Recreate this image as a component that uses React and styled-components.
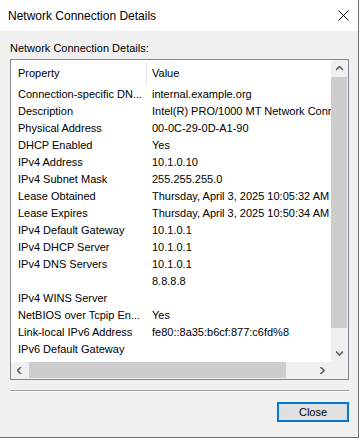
import React from 'react';
import styled, { createGlobalStyle } from 'styled-components';

const GlobalStyle = createGlobalStyle`
  html, body {
    margin: 0;
    padding: 0;
    background: #ffffff;
  }
  * {
    box-sizing: border-box;
  }
`;

const rows = [
  ['Connection-specific DN...', 'internal.example.org'],
  ['Description', 'Intel(R) PRO/1000 MT Network Connection'],
  ['Physical Address', '00-0C-29-0D-A1-90'],
  ['DHCP Enabled', 'Yes'],
  ['IPv4 Address', '10.1.0.10'],
  ['IPv4 Subnet Mask', '255.255.255.0'],
  ['Lease Obtained', 'Thursday, April 3, 2025 10:05:32 AM'],
  ['Lease Expires', 'Thursday, April 3, 2025 10:50:34 AM'],
  ['IPv4 Default Gateway', '10.1.0.1'],
  ['IPv4 DHCP Server', '10.1.0.1'],
  ['IPv4 DNS Servers', '10.1.0.1'],
  ['', '8.8.8.8'],
  ['IPv4 WINS Server', ''],
  ['NetBIOS over Tcpip En...', 'Yes'],
  ['Link-local IPv6 Address', 'fe80::8a35:b6cf:877:c6fd%8'],
  ['IPv6 Default Gateway', ''],
  ['IPv6 DNS Servers', ''],
];

const Window = styled.div`
  width: 359px;
  height: 438px;
  display: flex;
  flex-direction: column;
  border-right: 1px solid #6f6f6f;
  border-bottom: 1px solid #6f6f6f;
  font-family: 'Liberation Sans', Arial, sans-serif;
  color: #000;
`;

const TitleBar = styled.div`
  height: 31px;
  flex: none;
  display: flex;
  align-items: center;
  justify-content: space-between;
  padding: 0 9px 0 8px;
  background: #fff;
  font-size: 12px;
`;

const Body = styled.div`
  flex: 1;
  background: #f0f0f0;
  padding: 11px 9px 0 10px;
  display: flex;
  flex-direction: column;
  font-size: 11px;
`;

const Label = styled.div`
  line-height: 13px;
  margin-bottom: 4px;
`;

const ListBox = styled.div`
  height: 321px;
  border: 1px solid #828790;
  background: #fff;
  display: grid;
  grid-template-columns: 320px 17px;
  grid-template-rows: 302px 17px;
`;

const Content = styled.div`
  overflow: hidden;
`;

const Header = styled.div`
  height: 26px;
  display: flex;
  align-items: flex-start;
  padding-top: 2px;
`;

const HeaderCell = styled.div`
  height: 23px;
  line-height: 23px;
  width: ${p => (p.$first ? '136px' : 'auto')};
  padding-left: ${p => (p.$first ? '7px' : '5px')};
  border-right: ${p => (p.$first ? '1px solid #e5e5e5' : 'none')};
`;

const Row = styled.div`
  display: grid;
  grid-template-columns: 136px auto;
  height: 17px;
  line-height: 17px;
  white-space: nowrap;
`;

const Cell = styled.div`
  padding-left: ${p => (p.$value ? '5px' : '7px')};
  overflow: ${p => (p.$value ? 'visible' : 'hidden')};
`;

const VScroll = styled.div`
  background: #f0f0f0;
  display: flex;
  flex-direction: column;
`;

const HScroll = styled.div`
  background: #f0f0f0;
  display: flex;
`;

const ArrowBox = styled.div`
  width: 17px;
  height: 17px;
  flex: none;
  display: flex;
  align-items: center;
  justify-content: center;
`;

const Track = styled.div`
  flex: 1;
  display: flex;
  flex-direction: ${p => (p.$vertical ? 'column' : 'row')};
`;

const Thumb = styled.div`
  background: #cdcdcd;
  flex: none;
  ${p =>
    p.$vertical
      ? 'height: 251px; margin: 0 1px 0 0;'
      : 'width: 257px; margin: 0 0 1px 1px;'}
`;

const Corner = styled.div`
  background: #f0f0f0;
`;

const Separator = styled.div`
  margin-top: 10px;
  border-top: 1px solid #a0a0a0;
  border-bottom: 1px solid #fff;
`;

const ButtonRow = styled.div`
  display: flex;
  justify-content: flex-end;
  margin-top: 10px;
`;

const Button = styled.button`
  width: 72px;
  height: 20px;
  background: #e1e1e1;
  border: 2px solid #0078d7;
  font-family: 'Liberation Sans', Arial, sans-serif;
  font-size: 11px;
  color: #000;
  padding: 0;
`;

const Chevron = ({ dir }) => {
  const pts = {
    up: '0,4 3.5,0.5 7,4',
    down: '0,0.5 3.5,4 7,0.5',
    left: '4,0 0.5,3.5 4,7',
    right: '0.5,0 4,3.5 0.5,7',
  }[dir];
  const vertical = dir === 'up' || dir === 'down';
  return (
    <svg width={vertical ? 7 : 5} height={vertical ? 5 : 7} viewBox={vertical ? '0 0 7 5' : '0 0 5 7'}>
      <polyline points={pts} fill="none" stroke="#606060" strokeWidth="1.6" />
    </svg>
  );
};

const CloseIcon = () => (
  <svg width="11" height="11" viewBox="0 0 11 11">
    <path d="M0.5 0.5 L10.5 10.5 M10.5 0.5 L0.5 10.5" stroke="#000" strokeWidth="1" />
  </svg>
);

export default function App() {
  return (
    <>
      <GlobalStyle />
      <Window>
        <TitleBar>
          <span>Network Connection Details</span>
          <CloseIcon />
        </TitleBar>
        <Body>
          <Label>Network Connection Details:</Label>
          <ListBox>
            <Content>
              <Header>
                <HeaderCell $first>Property</HeaderCell>
                <HeaderCell>Value</HeaderCell>
              </Header>
              {rows.map(([prop, value], i) => (
                <Row key={i}>
                  <Cell>{prop}</Cell>
                  <Cell $value>{value}</Cell>
                </Row>
              ))}
            </Content>
            <VScroll>
              <ArrowBox>
                <Chevron dir="up" />
              </ArrowBox>
              <Track $vertical>
                <Thumb $vertical />
              </Track>
              <ArrowBox>
                <Chevron dir="down" />
              </ArrowBox>
            </VScroll>
            <HScroll>
              <ArrowBox>
                <Chevron dir="left" />
              </ArrowBox>
              <Track>
                <Thumb />
              </Track>
              <ArrowBox>
                <Chevron dir="right" />
              </ArrowBox>
            </HScroll>
            <Corner />
          </ListBox>
          <Separator />
          <ButtonRow>
            <Button>Close</Button>
          </ButtonRow>
        </Body>
      </Window>
    </>
  );
}
